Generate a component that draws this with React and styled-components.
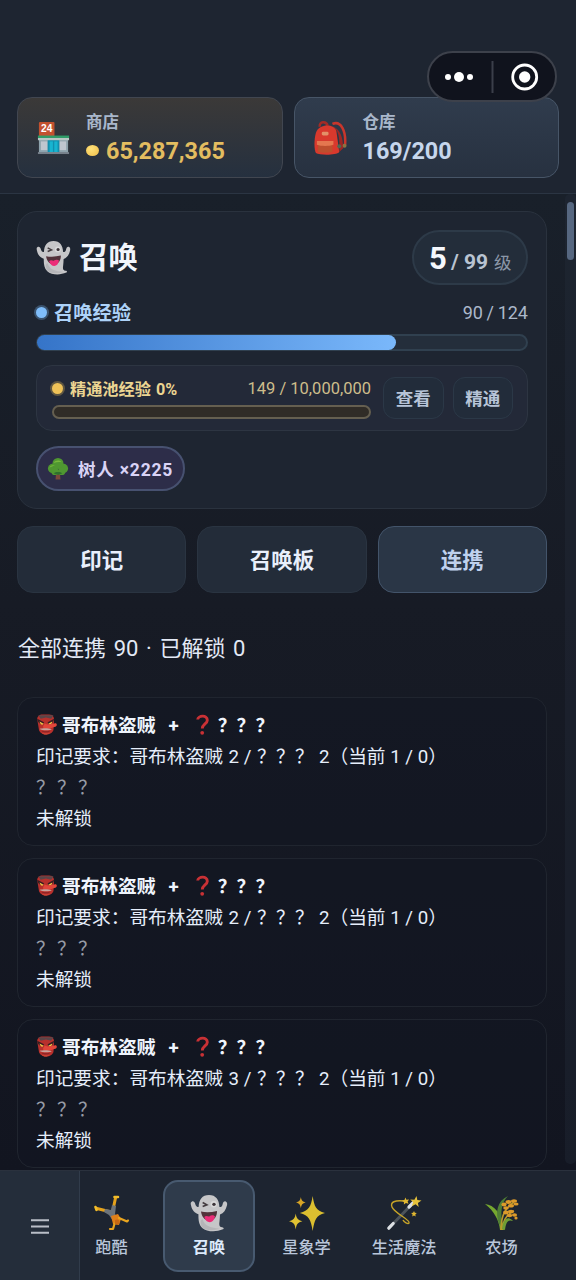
import React from "react";
import styled, { createGlobalStyle, css } from "styled-components";

//*! Styles !!!!!!!
const GlobalStyle = createGlobalStyle`
  * {
    box-sizing: border-box;
  }
  body {
    margin: 0;
    background: #141822;
    color: #e6eefb;
    font-family: Roboto, "Noto Sans CJK SC", sans-serif;
  }
  button {
    font-family: inherit;
    padding: 0;
    cursor: pointer;
  }
`;

const Page = styled.div`
  position: relative;
  display: flex;
  flex-direction: column;
  width: 576px;
  height: 1280px;
  overflow: hidden;
`;

const Header = styled.header`
  flex: none;
  display: flex;
  align-items: flex-start;
  gap: 11px;
  height: 194px;
  padding: 97px 17px 0;
  background: #1e2531;
  border-bottom: 1px solid #2b3543;
`;
const StatCard = styled.div`
  flex: 1;
  display: flex;
  align-items: center;
  gap: 15px;
  height: 81px;
  padding: 0 18px;
  border: 1px solid ${(props) => (props.$gold ? "#414650" : "#475567")};
  border-radius: 15px;
  background: ${(props) =>
    props.$gold
      ? "linear-gradient(#3b3938, #25303f)"
      : "linear-gradient(#303c4d, #273140)"};
`;
const StatText = styled.div`
  display: flex;
  flex-direction: column;
`;
const StatLabel = styled.span`
  height: 26px;
  font-size: 16.5px;
  line-height: 27px;
  font-weight: 700;
  color: #a9b7cb;
`;
const StatValue = styled.span`
  display: flex;
  align-items: center;
  gap: 7px;
  height: 32px;
  font-size: 23.4px;
  line-height: 32px;
  font-weight: 700;
  color: ${(props) => (props.$gold ? "#e3bd60" : "#c6d6ec")};
`;
const Coin = styled.i`
  width: 13px;
  height: 11px;
  border-radius: 50%;
  background: radial-gradient(circle at 40% 35%, #ffe27a, #efbd49);
`;

// floats over the top right corner of the header
const Capsule = styled.div`
  position: absolute;
  top: 51px;
  left: 427px;
  display: flex;
  align-items: center;
  width: 130px;
  height: 51px;
  border: 2px solid #3d414b;
  border-radius: 26px;
  background: #10131d;
`;

const Main = styled.main`
  flex: 1;
  display: flex;
  min-height: 0;
  background: linear-gradient(#19202a, #171b25 42%, #121520);
`;
const Content = styled.div`
  flex: 1;
  padding: 17px 18px 0 17px;
  overflow: hidden;
`;
const ScrollTrack = styled.div`
  flex: none;
  width: 11px;
  height: 970px;
  padding: 8px 2px 0;
  background: rgba(38, 46, 60, 0.35);
  border-radius: 5px;
`;
const ScrollThumb = styled.div`
  height: 58px;
  border-radius: 4px;
  background: #566780;
`;

const Panel = styled.section`
  height: 298px;
  padding: 18px 18px 0;
  border: 1px solid #2a323e;
  border-radius: 20px;
  background: #1e2531;
`;
const Row = styled.div`
  display: flex;
  align-items: center;
  justify-content: space-between;
`;
const Title = styled.h1`
  display: flex;
  align-items: center;
  gap: 8px;
  margin: 0;
  font-size: 29.5px;
  line-height: 40px;
  font-weight: 700;
  color: #f1f5fc;
`;
const LevelPill = styled.div`
  display: flex;
  align-items: baseline;
  height: 55px;
  width: 116px;
  padding-left: 15px;
  border: 2px solid #2d3a48;
  border-radius: 28px;
  background: #232d3a;
  line-height: 54px;
  white-space: pre;
`;
const Level = styled.b`
  width: 22px;
  font-size: 31px;
  color: #f5f8fd;
`;
const LevelMax = styled.span`
  font-size: 21px;
  font-weight: 700;
  color: #b9c4d2;
`;
const LevelUnit = styled.span`
  margin-left: 6px;
  font-size: 17.5px;
  color: #8b97a8;
`;
const ExpRow = styled(Row)`
  height: 30px;
  margin: 12px 0 7px;
`;
const ExpLabel = styled.span`
  display: flex;
  align-items: center;
  gap: 5px;
  font-size: ${(props) => (props.$gold ? "16.2px" : "19.3px")};
  font-weight: 700;
  word-spacing: ${(props) => (props.$gold ? "1px" : "0")};
  color: ${(props) => (props.$gold ? "#ecd592" : "#add2f8")};
`;
const Dot = styled.i`
  width: 11px;
  height: 11px;
  margin-right: 2px;
  border-radius: 50%;
  background: ${(props) => (props.$gold ? "#efc258" : "#7fbdfa")};
  box-shadow: 0 0 0 2px
    ${(props) => (props.$gold ? "rgba(239,194,88,.3)" : "rgba(127,189,250,.3)")};
`;
const ExpValue = styled.span`
  font-size: ${(props) => (props.$gold ? "16.5px" : "18px")};
  word-spacing: ${(props) => (props.$gold ? "0" : "-0.8px")};
  color: ${(props) => (props.$gold ? "#cdbd8b" : "#abb8ca")};
`;
const Track = styled.div`
  height: ${(props) => (props.$gold ? "14px" : "17px")};
  border: ${(props) => (props.$gold ? "2px solid #655f50" : "2px solid #30404f")};
  border-radius: 9px;
  background: ${(props) => (props.$gold ? "#302c27" : "#242e3b")};
`;
const Fill = styled.div`
  height: 15px;
  margin: -1px;
  border-radius: 8px;
  background: linear-gradient(90deg, #3574c8, #7ab8fb);
`;
const Pool = styled.div`
  display: flex;
  align-items: center;
  height: 66px;
  margin-top: 14px;
  padding: 0 14px 0 15px;
  border: 1px solid #2d3542;
  border-radius: 16px;
  background: #232938;
`;
const PoolInfo = styled.div`
  flex: 1;
  margin-right: 12px;
`;
const PoolRow = styled(Row)`
  height: 22px;
  margin-bottom: 6px;
`;
const SmallButton = styled.button`
  flex: none;
  width: 60.5px;
  height: 42px;
  margin-right: 9px;
  padding-bottom: 2px;
  border: 1px solid #2b3847;
  border-radius: 12px;
  background: #222c3a;
  font-size: 17.5px;
  font-weight: 700;
  color: #b7c4d8;
  &:last-child {
    margin-right: 0;
  }
`;
const Tag = styled.div`
  display: inline-flex;
  align-items: center;
  gap: 9px;
  width: 149px;
  height: 45px;
  margin-top: 15px;
  padding-left: 9px;
  border: 2px solid #475170;
  border-radius: 23px;
  background: #2d2d49;
  font-size: 17.5px;
  font-weight: 700;
  color: #d9d3f6;
  white-space: nowrap;
`;
const TagCount = styled.span`
  letter-spacing: 0.8px;
`;

const Tabs = styled.nav`
  display: grid;
  grid-template-columns: repeat(3, 1fr);
  gap: 11px;
  margin-top: 17px;
`;
const Tab = styled.button`
  height: 67px;
  padding-bottom: 2px;
  border: 1px solid ${(props) => (props.$active ? "#43546a" : "#2a3441")};
  border-radius: 16px;
  background: ${(props) => (props.$active ? "#2a3646" : "#232c39")};
  font-size: 21.5px;
  font-weight: 700;
  color: ${(props) => (props.$active ? "#bfd1ee" : "#e9effc")};
`;
const Summary = styled.p`
  margin: 38px 1px 31px;
  font-size: 22px;
  line-height: 35px;
  word-spacing: 2.2px;
  color: #e3e9f5;
`;

const ComboCard = styled.article`
  height: 149px;
  margin-bottom: 12px;
  padding: 11px 18px;
  border: 1px solid #20252f;
  border-radius: 16px;
  background: rgba(18, 22, 33, 0.5);
`;
const Line = styled.div`
  display: flex;
  align-items: center;
  height: 31px;
  padding-top: 3px;
  font-size: 18.7px;
  line-height: 28px;
  white-space: pre;
  svg {
    margin-top: -4px;
  }
  ${(props) =>
    props.$bold &&
    css`
      font-weight: 700;
      color: #eff4fc;
    `}
  ${(props) =>
    props.$muted &&
    css`
      color: #969ba6;
    `}
`;
const Gap = styled.span`
  flex: none;
  width: ${(props) => props.$w};
`;
const Marks = styled.span`
  letter-spacing: ${(props) => props.$spacing || "0.3px"};
  margin-left: ${(props) => props.$left || "0"};
`;

const BottomBar = styled.footer`
  flex: none;
  display: flex;
  height: 110px;
  border-top: 1px solid #2a313d;
  background: #1d2430;
`;
const MenuButton = styled.button`
  position: relative;
  z-index: 1;
  flex: none;
  display: flex;
  align-items: center;
  justify-content: center;
  width: 80px;
  padding-top: 2px;
  border: 0;
  border-right: 1px solid #313c4b;
  background: #242d3a;
`;
const NavList = styled.div`
  display: flex;
  gap: 5.5px;
  margin-left: -14.5px;
  padding-top: 9px;
`;
const NavItem = styled.button`
  display: flex;
  flex-direction: column;
  align-items: center;
  width: 92px;
  height: 92px;
  padding-top: 12px;
  border: 2px solid ${(props) => (props.$active ? "#485a70" : "transparent")};
  border-radius: 15px;
  background: ${(props) => (props.$active ? "#2f3b4b" : "transparent")};
  font-size: 16.2px;
  line-height: 26px;
  font-weight: ${(props) => (props.$active ? 700 : 500)};
  color: ${(props) => (props.$active ? "#dceafb" : "#b9c6da")};
  white-space: nowrap;
`;
const NavIcon = styled.span`
  display: flex;
  align-items: center;
  height: 38px;
  margin-bottom: 3px;
`;
const Svg = styled.svg`
  flex: none;
  display: block;
`;
//*! End of Styles!!!!!!

const Icon = ({ size = 36, children }) => (
  <Svg width={size} height={size} viewBox="0 0 36 36">
    {children}
  </Svg>
);

const StoreIcon = () => (
  <Icon size={35}>
    <rect x="3" y="2" width="16" height="15" rx="1" fill="#c2512f" />
    <text
      x="11"
      y="12.5"
      textAnchor="middle"
      fontFamily="Liberation Sans, sans-serif"
      fontSize="10.5"
      fontWeight="700"
      fill="#fff"
    >
      24
    </text>
    <rect x="3" y="19" width="30" height="15" fill="#8fa3ad" />
    <rect x="5" y="22" width="7" height="9" fill="#bfc6cf" />
    <rect x="24" y="22" width="7" height="9" fill="#bfc6cf" />
    <rect x="12" y="20" width="12" height="13" fill="#128fae" />
    <rect x="14" y="22" width="3.4" height="11" fill="#18b4d0" />
    <rect x="18.8" y="22" width="3.4" height="11" fill="#18b4d0" />
    <rect x="2" y="16" width="32" height="2.6" fill="#2f9c68" />
    <rect x="2" y="18.5" width="32" height="2.3" fill="#b9c6c4" />
    <rect x="2" y="33" width="32" height="2" fill="#77808a" />
  </Icon>
);

const BackpackIcon = () => (
  <Icon size={35}>
    <path d="M20 4c9-4 14 8 13 21l-5 4" fill="none" stroke="#c9362c" strokeWidth="2.600" />
    <path d="M7 7c-1-6 7-6 8-1" fill="none" stroke="#a32b26" strokeWidth="2.600" />
    <path d="M3 13C6 4 21 3 24 11l3 22c-3 3.500-20 3.500-24 1-2-4-2-14 0-21z" fill="#d8392d" />
    <path d="M19 6c7 3 9 12 8 27l4-4c0-11-3-20-12-23z" fill="#9d2724" />
    <rect x="9" y="12" width="7" height="4" rx="1.500" fill="#e39068" />
    <path d="M5 23h15v10c-5 1-11 1-15 0z" fill="#bd4f2e" />
    <path d="M4 21.500h17v4c-5 1.600-12 1.600-17 0z" fill="#e4774f" />
    <circle cx="27" cy="27" r="2" fill="#4a6a55" />
    <circle cx="32.500" cy="26.500" r="2" fill="#8b7440" />
  </Icon>
);

const GhostIcon = ({ size }) => (
  <Icon size={size}>
    <path
      d="M18 1C11.500 1 8.500 5.500 8.200 12 7 13 5.500 11.500 5 9.500 4.600 7.500 3 6.200 1.600 7.300.2 8.200.7 9.600 1 11c.9 4.400 3.600 7.300 7 8.300-.1 5 .3 9.700 3.600 12.800 4.200 3.800 13 4.300 19.600 1.400 1.300-.7.600-1.900-.7-2-2.900-.2-3-2.200-2.600-5 .2-2.300.5-4.600.5-7 3.500-1.300 5.600-4.200 6.600-8.500.4-1.700.3-3.400-1.200-4-1.500-.5-2.500.8-2.900 2.700-.4 1.900-1.400 2.900-3 2.700C27.600 5.500 24.600 1 18 1z"
      fill="#c6c6c8"
    />
    <path d="M12 24c2 7 8 8 16 9-6 2-13 1.600-16-1-2-2-3-8 0-8z" fill="#a7a8ab" opacity=".55" />
    <path d="M10.400 16.600c4.800 1 9.900.7 15.200-.6 0 5-2.400 8.800-7 9.100-4.900.2-7.500-3.700-8.200-8.500z" fill="#52323a" />
    <path d="M13.500 21.800c2-2 4.400.2 5-.8 1.400-1 4-1.200 5.200.4-1 3.800-2.600 5.400-5 5.300-2.400 0-4-1.600-5.200-4.900z" fill="#ec2d78" />
    <path d="M12 8l4 2.200-4 1.600" fill="none" stroke="#433b3f" strokeWidth="1.500" />
    <circle cx="22.500" cy="9.700" r="3" fill="#d9d9da" />
    <circle cx="22.700" cy="9.800" r="1.600" fill="#3c3439" />
  </Icon>
);

const TreeIcon = () => (
  <Icon size={22}>
    <path d="M15 20h6l1 15h-8z" fill="#7b493a" />
    <g fill="#4f9731">
      <circle cx="9" cy="17" r="7.500" />
      <circle cx="27" cy="17" r="7.500" />
      <circle cx="18" cy="9" r="9" />
      <circle cx="13" cy="22" r="6" />
      <circle cx="24" cy="22" r="6" />
    </g>
    <path d="M11 8c3-5 10-5 13-1-5-1-9 0-13 1zM4 16c2-4 6-5 9-3-4 0-6 1-9 3z" fill="#79b83d" />
    <path d="M11 25c3-3 11-3 14 0-4 3-10 3-14 0z" fill="#2f702d" />
  </Icon>
);

const GoblinIcon = () => (
  <Icon size={21}>
    <path d="M2 8C4 0 10 1 17 1s13-1 14 8l-1 18c-3 11-22 11-25 0z" fill="#b8302c" />
    <path d="M4 2h26l-4 6-9-2-9 2z" fill="#5a4548" />
    <path d="M2 8l12 6-2 3c-5 0-9-2-10-9zM31 8l-11 6 1 3c5 0 9-2 10-9z" fill="#3a1d22" />
    <path d="M6 13l7 3.500-2 2c-3 0-4-2-5-5.500zM28 13l-7 3.500 2 1.500c3 0 4-1 5-5z" fill="#f2c548" />
    <path d="M15 16c2 3 9 2 18 0 4 0 3 5 0 6-6 2-16 5-21 1 0-3 2-4 3-7z" fill="#e2463a" />
    <path d="M6 25.500c5-1.500 16-1.500 21 .5-3 2.500-17 2.500-21-.5z" fill="#c9a39c" />
    <path d="M10 29c4 1.500 10 1.500 14 0-1 3-12 3.500-14 0z" fill="#6f1c20" />
    <path d="M10 32c4 2 9 2 13 0-2 4-11 4-13 0z" fill="#d9503c" />
  </Icon>
);

const QuestionIcon = () => (
  <Svg width="13" height="21" viewBox="0 0 13 21">
    <path d="M1.700 5.500C2 1.500 11.300.4 11.300 6.200c0 3.500-5 4-5 8.300" fill="none" stroke="#c93135" strokeWidth="2.900" />
    <circle cx="6.200" cy="18.800" r="1.900" fill="#c93135" />
  </Svg>
);

const CartwheelIcon = () => (
  <Icon size={36}>
    <path d="M18.500 17L21.500 3M17 17L3 13.500" fill="none" stroke="#e5a21b" strokeWidth="3" strokeLinecap="round" />
    <path d="M20.500 2h3.500M1.500 12l1 2.800" stroke="#f2bd2b" strokeWidth="2.600" strokeLinecap="round" />
    <path d="M18 10l4 1-1 8 2 4-4 3-4-6-5-3 1-3 6 1z" fill="#6d747b" />
    <path d="M17 21l7-2 3 5-2 6-6-1z" fill="#df7e18" />
    <path d="M25 23l8 3.500 1-1M21 27l-2 7h-3" fill="none" stroke="#e9a51f" strokeWidth="2.200" strokeLinecap="round" strokeLinejoin="round" />
    <circle cx="23" cy="27" r="2.500" fill="#c76814" />
  </Icon>
);

const SparklesIcon = () => (
  <Icon size={37}>
    <path d="M24 1c1.700 10.500 3 14 12 16.500C27 20 26 24 24 35c-1.700-11-3.500-15-12.500-17.500C20.500 15 22.300 11.500 24 1z" fill="#dcbf30" />
    <path d="M7.500 18c.8 4.800 2 6.500 6.500 7.500-4.500 1.200-5.700 2.800-6.500 8-.8-5.200-2-6.800-6.500-8 4.500-1 5.700-2.700 6.500-7.500z" fill="#e0c232" />
    <path d="M12.500 2c.6 3.400 1.600 4.500 4.700 5.300-3.100.9-4.100 2-4.700 5.500-.6-3.500-1.600-4.600-4.700-5.500 3.100-.8 4.100-1.900 4.700-5.300z" fill="#d7a426" />
  </Icon>
);

const WandIcon = () => (
  <Icon size={36}>
    <path d="M3 33L27 8" stroke="#4c535a" strokeWidth="3" strokeLinecap="round" />
    <path d="M2.800 33.200l4.400-4.700M23 12l5-5" stroke="#dce0e4" strokeWidth="3.200" strokeLinecap="round" />
    <path d="M18 6C9 5 4 7 6 12c2 6 19 13 17 16-1 1.500-5-1-6-3" fill="none" stroke="#c7a428" strokeWidth="1.400" />
    <path d="M30.500 1l.8 4 4.200.6-3.600 2.300.8 4.100-3.100-2.700-3.900 2 1.500-4-3-2.800 4.200.2z" fill="#e6c23b" />
    <path d="M19.500 2.500l.9 2.200 2.700-.2-1.500 2 .9 2.300-2.600-.7-2 1.500v-2.500l-2-1.400 2.500-.7zM28 16l.8 1.800 2 .2-1.500 1.400.4 2-1.700-1-1.800 1 .4-2-1.500-1.400 2-.2z" fill="#e0b731" />
  </Icon>
);

const RiceIcon = () => (
  <Icon size={36}>
    <path d="M16 35C15 25 10 16 1 9c9 1 17 9 19 26z" fill="#75a72f" />
    <path d="M15 29C11 17 13 6 24 1c-7 7-8 16-5 32z" fill="#4f7e36" />
    <path d="M17 35c0-17 6-23 13-28M18 35c1-11 5-16 12-19" fill="none" stroke="#b99a2b" strokeWidth="1.600" />
    <path d="M18 34c1-10 6-14 11-8-5-2-7 1-8 9z" fill="#6f9d35" />
    <g fill="#dc9a2a">
      <ellipse cx="20" cy="9.500" rx="2.600" ry="1.900" />
      <ellipse cx="24.500" cy="7" rx="3" ry="1.900" />
      <ellipse cx="30" cy="6" rx="3" ry="1.700" />
      <ellipse cx="22" cy="13" rx="2.800" ry="1.800" />
      <ellipse cx="27" cy="10.800" rx="3" ry="1.800" />
      <ellipse cx="32" cy="9" rx="2.600" ry="1.500" />
      <ellipse cx="22" cy="17.500" rx="2.800" ry="1.900" />
      <ellipse cx="27" cy="16.500" rx="3" ry="1.800" />
      <ellipse cx="30.500" cy="20" rx="2.600" ry="1.800" />
      <ellipse cx="25.500" cy="20.500" rx="2.800" ry="1.700" />
      <ellipse cx="32" cy="23" rx="1.600" ry="1.500" />
    </g>
  </Icon>
);

const combos = [
  { id: 1, need: 2 },
  { id: 2, need: 2 },
  { id: 3, need: 3 },
];

const navItems = [
  { name: "跑酷", icon: <CartwheelIcon /> },
  { name: "召唤", icon: <GhostIcon size={38} />, active: true },
  { name: "星象学", icon: <SparklesIcon /> },
  { name: "生活魔法", icon: <WandIcon /> },
  { name: "农场", icon: <RiceIcon /> },
];

function Combo({ need }) {
  return (
    <ComboCard>
      <Line $bold>
        <GoblinIcon />
        <Gap $w="5px" />
        哥布林盗贼
        <Gap $w="13px" />+<Gap $w="17px" />
        <QuestionIcon />
        <Marks $left="9px">？？？</Marks>
      </Line>
      <Line>
        印记要求：哥布林盗贼 <Gap $w="1px" />
        {need} / <Marks $left="1px">？？？</Marks>
        <Gap $w="5px" />
        2（当前 1 / 0）
      </Line>
      <Line $muted>
        <Marks $spacing="2.300px">？？？</Marks>
      </Line>
      <Line>未解锁</Line>
    </ComboCard>
  );
}

export default function App() {
  const exp = { now: 90, max: 124 };

  return (
    <Page>
      <GlobalStyle />
      <Header>
        <StatCard $gold>
          <StoreIcon />
          <StatText>
            <StatLabel>商店</StatLabel>
            <StatValue $gold>
              <Coin />
              65,287,365
            </StatValue>
          </StatText>
        </StatCard>
        <StatCard>
          <BackpackIcon />
          <StatText>
            <StatLabel>仓库</StatLabel>
            <StatValue>169/200</StatValue>
          </StatText>
        </StatCard>
      </Header>
      <Capsule>
        <Svg width="126" height="47" viewBox="0 0 126 47">
          <circle cx="19" cy="24" r="3" fill="#fff" />
          <circle cx="30" cy="24" r="5" fill="#fff" />
          <circle cx="41" cy="24" r="3" fill="#fff" />
          <path d="M63.500 8v32" stroke="#3b3f4a" strokeWidth="2" />
          <circle cx="95.700" cy="24" r="12" fill="none" stroke="#fff" strokeWidth="2.800" />
          <circle cx="95.700" cy="24" r="5.700" fill="#fff" />
        </Svg>
      </Capsule>

      <Main>
        <Content>
          <Panel>
            <Row>
              <Title>
                <GhostIcon size={35} />
                召唤
              </Title>
              <LevelPill>
                <Level>5</Level>
                <LevelMax>/ 99</LevelMax>
                <LevelUnit>级</LevelUnit>
              </LevelPill>
            </Row>
            <ExpRow>
              <ExpLabel>
                <Dot />
                召唤经验
              </ExpLabel>
              <ExpValue>
                {exp.now} / {exp.max}
              </ExpValue>
            </ExpRow>
            <Track>
              <Fill style={{ width: `${(exp.now / exp.max) * 100 + 1}%` }} />
            </Track>
            <Pool>
              <PoolInfo>
                <PoolRow>
                  <ExpLabel $gold>
                    <Dot $gold />
                    精通池经验 0%
                  </ExpLabel>
                  <ExpValue $gold>149 / 10,000,000</ExpValue>
                </PoolRow>
                <Track $gold />
              </PoolInfo>
              <SmallButton>查看</SmallButton>
              <SmallButton>精通</SmallButton>
            </Pool>
            <Tag>
              <TreeIcon />
              <TagCount>树人 ×2225</TagCount>
            </Tag>
          </Panel>

          <Tabs>
            <Tab>印记</Tab>
            <Tab>召唤板</Tab>
            <Tab $active>连携</Tab>
          </Tabs>

          <Summary>全部连携 90 · 已解锁 0</Summary>

          {combos.map((combo) => (
            <Combo key={combo.id} need={combo.need} />
          ))}
        </Content>
        <ScrollTrack>
          <ScrollThumb />
        </ScrollTrack>
      </Main>

      <BottomBar>
        <MenuButton>
          <Svg width="18" height="15" viewBox="0 0 18 15">
            <path d="M0 1.200h18M0 7.500h18M0 13.800h18" stroke="#b9bec7" strokeWidth="2" />
          </Svg>
        </MenuButton>
        <NavList>
          {navItems.map((item) => (
            <NavItem key={item.name} $active={item.active}>
              <NavIcon>{item.icon}</NavIcon>
              {item.name}
            </NavItem>
          ))}
        </NavList>
      </BottomBar>
    </Page>
  );
}
